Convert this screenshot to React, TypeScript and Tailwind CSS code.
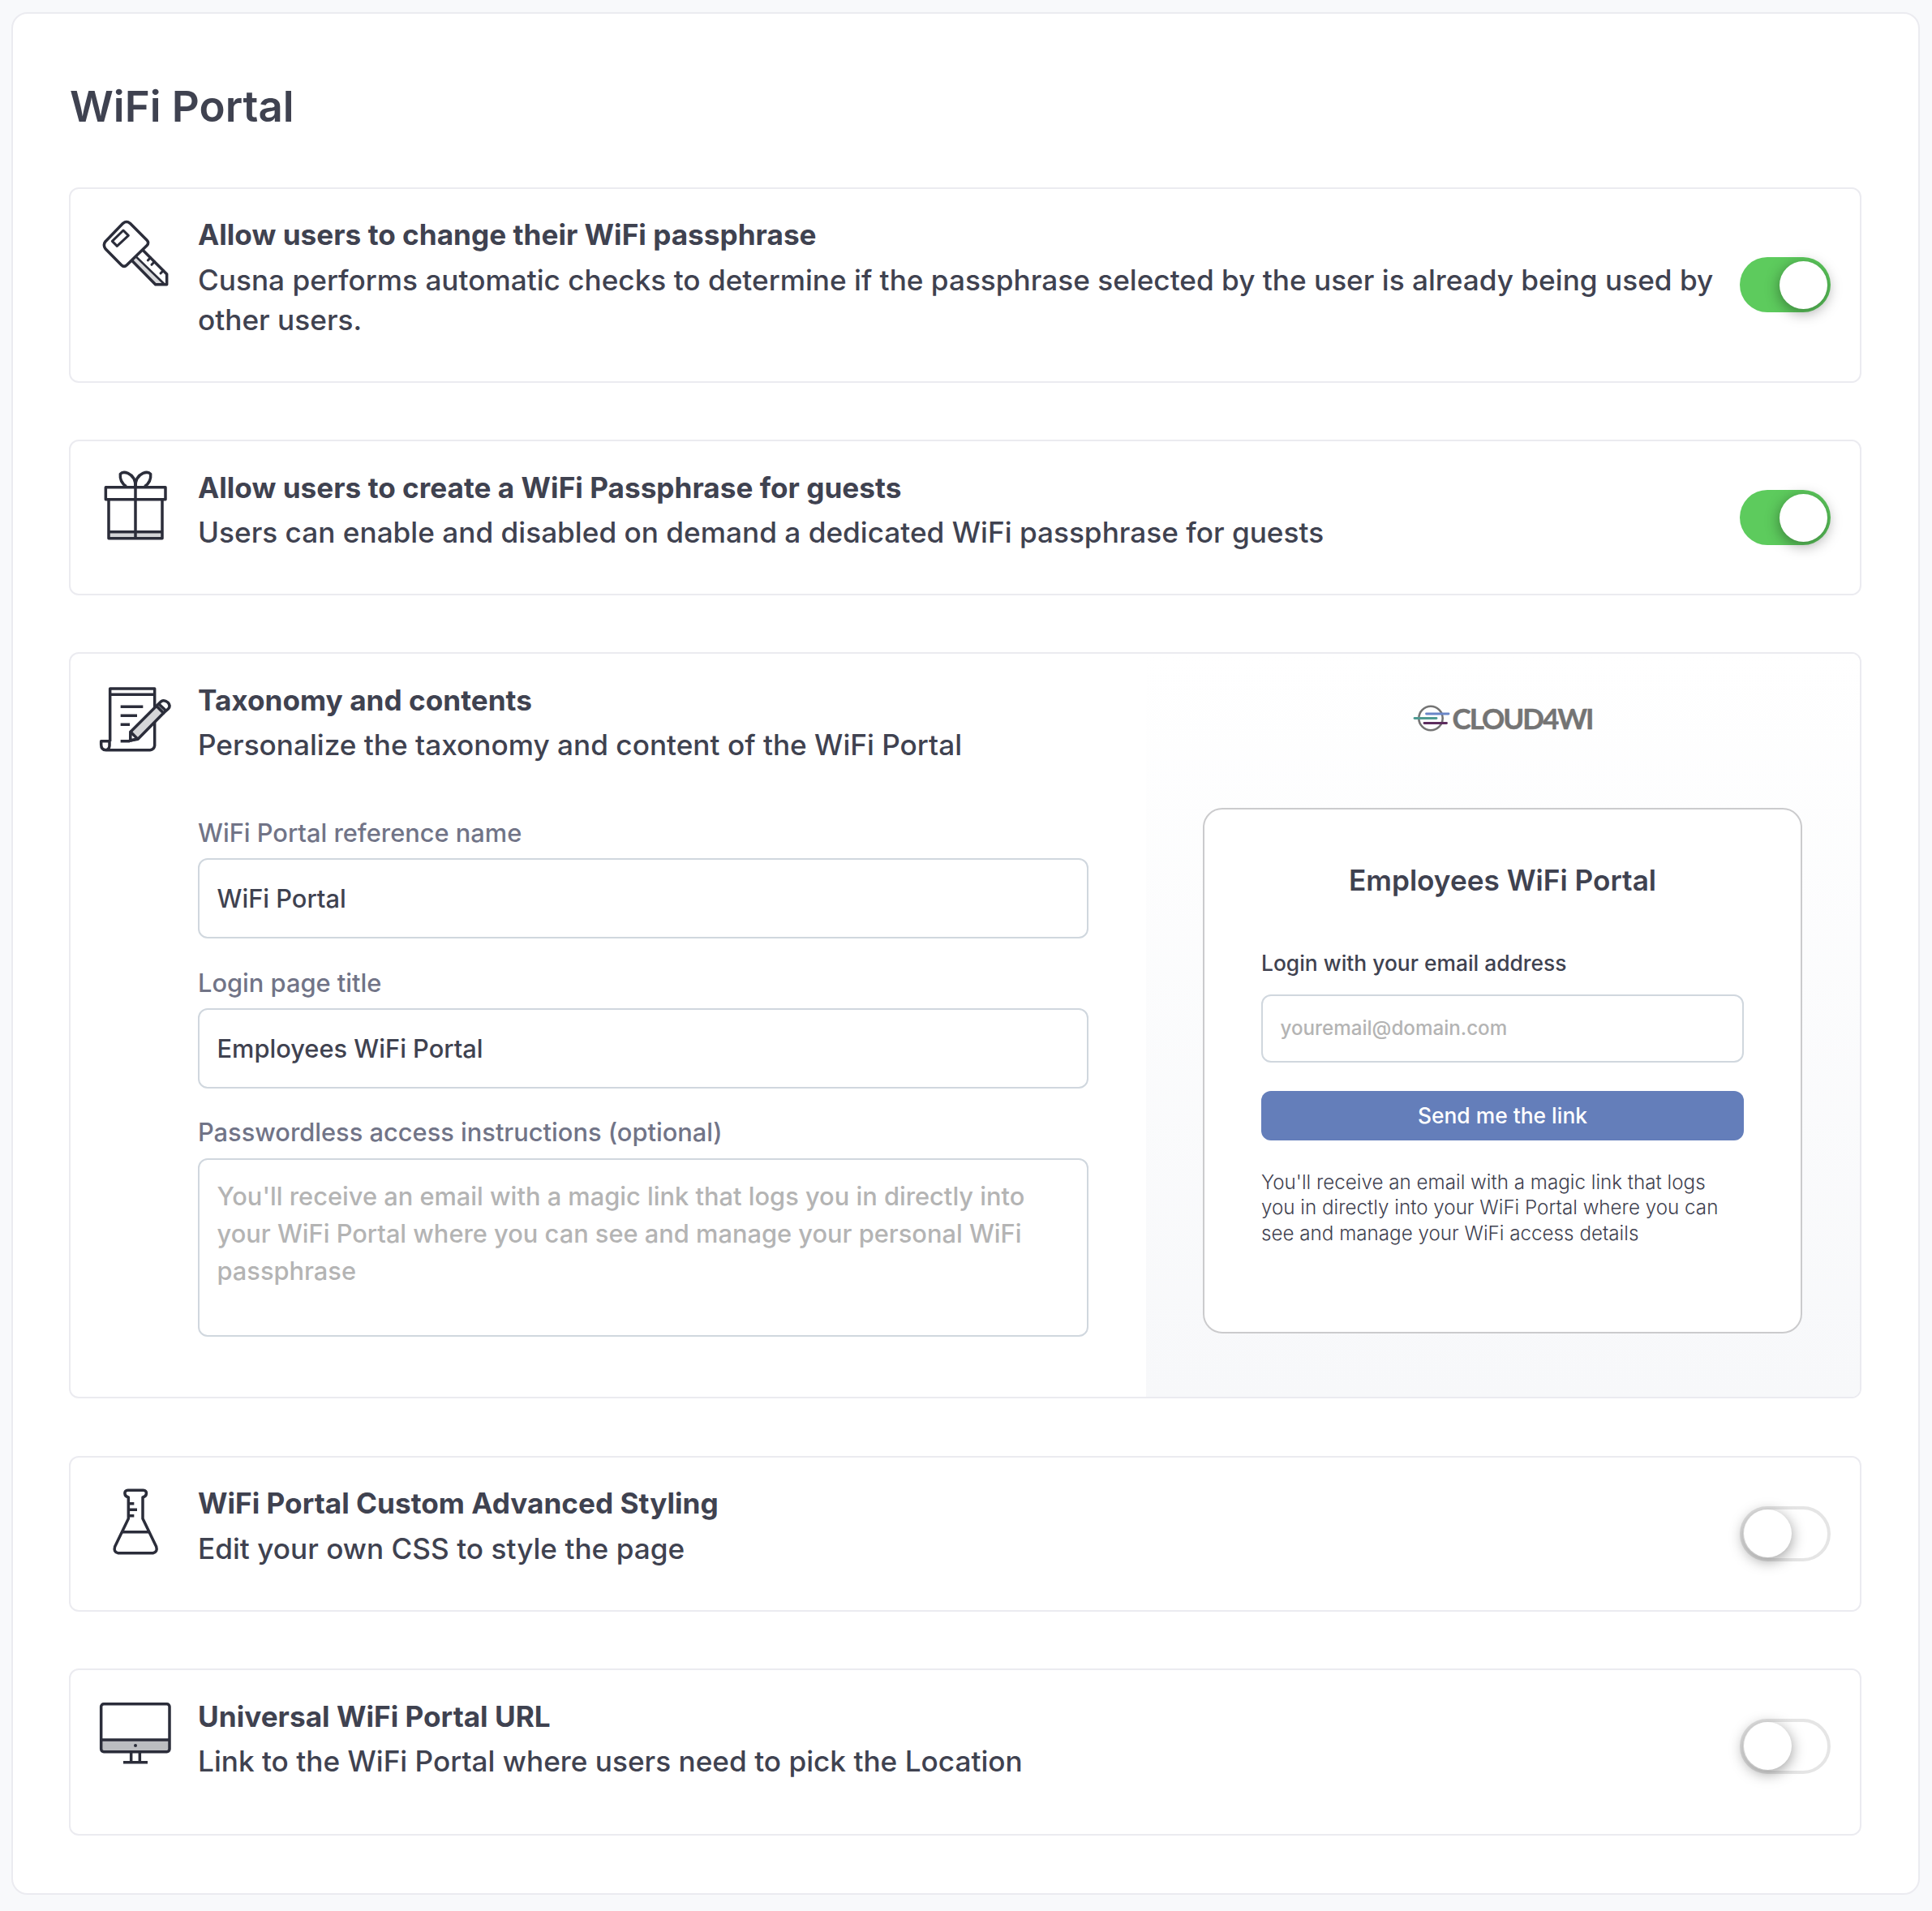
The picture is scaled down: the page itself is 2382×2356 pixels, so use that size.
import type { ReactNode } from "react";

const INK = "#2b2d3a";

function Icon({ x = 39, y, children }: { x?: number; y: number; children: ReactNode }) {
  return (
    <svg
      className="h-[88px] w-[88px] shrink-0 overflow-visible"
      viewBox={`${x} ${y} 264 264`}
      fill="none"
      stroke={INK}
      strokeWidth="10.500"
      strokeLinejoin="round"
    >
      {children}
    </svg>
  );
}

const KeyIcon = () => (
  <Icon x={41} y={51}>
    <path d="M166 209 L177 199 L282 303 L247 303 L158 213Z" fill="#d8d9db" stroke="none" />
    <path d="M127 76 Q140 65 153 76 L215 138 Q225 148 215 158 L141 230 Q131 240 121 230 L62 170 Q52 156 62 143Z" />
    <path d="M128 102 L147 121 L105 160 L87 142Z" strokeWidth="9" />
    <path d="M200 175 L289 264 V302 H247 L160 214" />
    <path d="M175 199 L279 300" strokeWidth="8" />
    <path d="M228 203 L219 213 M243 218 L233 229 M276 251 L266 261" strokeWidth="9" strokeLinecap="round" />
  </Icon>
);

const GiftIcon = () => (
  <Icon y={39}>
    <rect x="74" y="277" width="194" height="16" fill="#d3d4d6" stroke="none" />
    <rect x="61" y="107" width="221" height="45" />
    <path d="M72 152 V296 H270 V152 M72 272 H270 M171 85 V296" />
    <path d="M171 103 Q171 68 143 55 Q124 48 115 58 Q112 88 137 104" />
    <path d="M171 103 Q171 68 199 55 Q218 48 227 58 Q230 88 205 104" />
  </Icon>
);

const ScrollIcon = () => (
  <Icon y={30}>
    <path d="M77 252 V57 H242 V268 Q240 283 225 284 H62 Q44 284 44 264 V251 H75 V268 Q74 282 62 284 M77 79 H242" />
    <path d="M116 124 H199 M116 157 H177 M116 190 H150 M116 251 H150" />
    <path d="M153 217 L249 121 L275 147 L180 244 L152 249Z" fill="#d5d6d8" />
    <path d="M153 217 L178 242 L152 249Z" fill="#ffffff" />
    <path d="M249 121 L266 104 Q278 97 291 108 Q303 121 292 132 L275 147Z" fill="#ffffff" />
    <path d="M257 113 L284 139" />
    <path d="M151 238 L162 248 L152 250Z" fill={INK} strokeWidth="3" />
  </Icon>
);

const FlaskIcon = () => (
  <Icon y={33}>
    <path d="M145 157 V78 C128 74 127 52 143 52 H200 C216 52 215 74 198 78 V157 L248 260 Q254 280 236 284 H106 Q89 280 95 260Z" />
    <path d="M121 206 H222 M145 101 H166 M145 124 H177 M145 146 H166" />
  </Icon>
);

const MonitorIcon = () => (
  <Icon y={40}>
    <path d="M45 197 H297 V231 Q296 240 288 240 H54 Q46 240 45 231Z" fill="#bcbdc1" stroke="none" />
    <rect x="44" y="63" width="253" height="177" rx="10" />
    <path d="M44 196 H297 M155 240 V276 M187 240 V276 M126 279 H216" />
    <circle cx="171" cy="217" r="6" fill={INK} stroke="none" />
  </Icon>
);

function Toggle({ on = false }: { on?: boolean }) {
  return (
    <div
      className={
        on
          ? "flex h-[68px] w-[112px] shrink-0 items-center justify-end rounded-full bg-[#5dcb5d] pr-1"
          : "flex h-[68px] w-[112px] shrink-0 items-center rounded-full border-4 border-[#e5e5e5] bg-white pl-px pb-px"
      }
    >
      <div className="h-[59px] w-[59px] rounded-full bg-white shadow-[0_4px_18px_rgba(0,0,0,0.4)]" />
    </div>
  );
}

function Heading({ title, text, snug = false }: { title: string; text: string; snug?: boolean }) {
  return (
    <div className="min-w-0 text-[35.2px] leading-[49px]">
      <h2 className={snug ? "pt-px font-bold" : "font-bold"}>{title}</h2>
      <p className={snug ? "mt-1.5 font-medium" : "mt-[7px] font-medium"}>{text}</p>
    </div>
  );
}

function OptionCard({
  icon,
  title,
  text,
  on,
  snug,
  className,
}: {
  icon: ReactNode;
  title: string;
  text: string;
  on?: boolean;
  snug?: boolean;
  className: string;
}) {
  return (
    <section
      className={`flex items-center rounded-xl border-2 border-[#ebebf0] bg-white pr-9 pl-9 ${className}`}
    >
      <div className="flex min-w-0 flex-1 items-start gap-[33px] self-start pt-8">
        <div className="pt-0.5">{icon}</div>
        <Heading title={title} text={text} snug={snug} />
      </div>
      <Toggle on={on} />
    </section>
  );
}

const fieldBox = "rounded-xl border-2 border-[#d0d7de] bg-white px-[21.5px]";

function Field({ label, value }: { label: string; value: string }) {
  return (
    <div className="mb-[37px]">
      <label className="mb-[13px] block leading-9 text-[#717487]">{label}</label>
      <div className={`flex h-[99px] items-center pt-0.5 ${fieldBox}`}>{value}</div>
    </div>
  );
}

function Logo() {
  return (
    <svg className="ml-1 block h-[70px] w-[270px]" viewBox="0 0 270 70">
      <circle cx="44" cy="35.500" r="14.700" fill="none" stroke="#747474" strokeWidth="2.600" />
      <path d="M38.500 30 H66" stroke="#6a86c8" strokeWidth="2.800" strokeLinecap="round" />
      <path d="M24 35.500 H51" stroke="#4f9a92" strokeWidth="2.800" strokeLinecap="round" />
      <path d="M36 41.500 H63.500" stroke="#5c2c5e" strokeWidth="2.800" strokeLinecap="round" />
      <text
        x="70.500"
        y="48.500"
        fontFamily="Lato, sans-serif"
        fontWeight="700"
        fontSize="35"
        fill="#747474"
        stroke="#747474"
        strokeWidth="0.500"
        textLength="175"
        lengthAdjust="spacing"
      >
        CLOUD4WI
      </text>
    </svg>
  );
}

function Preview() {
  return (
    <div className="flex w-[880px] shrink-0 flex-col items-center rounded-r-[10px] bg-linear-to-b from-white to-[#f7f8fa] pt-[44px]">
      <Logo />
      <div className="mt-[76px] mr-px h-[648px] w-[739px] rounded-3xl border-2 border-[#cbcbcd] bg-white px-[70px] pt-[62px]">
        <h3 className="text-center text-[35.2px] leading-[50px] font-semibold">Employees WiFi Portal</h3>
        <label className="mt-[59px] block text-[26.4px] leading-[36px] font-medium">
          Login with your email address
        </label>
        <div className={`mt-[21px] flex h-[84px] items-center text-[24.2px] font-medium text-[#b4b4b4] ${fieldBox}`}>
          youremail@domain.com
        </div>
        <button className="mt-[35px] flex h-[61px] w-full items-center justify-center rounded-xl bg-[#647eba] text-[26.4px] font-medium text-white">
          Send me the link
        </button>
        <p className="mt-9 text-[24.2px] leading-[31.4px] font-light">
          You'll receive an email with a magic link that logs
          <br />
          you in directly into your WiFi Portal where you can
          <br />
          see and manage your WiFi access details
        </p>
      </div>
    </div>
  );
}

export default function App() {
  return (
    <div
      className="h-[2356px] w-[2382px] bg-[#f8f9fb] pt-[15px] pl-[14px] text-[#3f4250]"
      style={{ fontFamily: "Inter, sans-serif" }}
    >
      <main className="h-[2321px] w-[2353px] rounded-[20px] border-2 border-[#ebebf0] bg-white pt-[82px] pr-[70px] pl-[69px]">
        <h1 className="pl-px text-[52.8px] leading-[64px] font-semibold">WiFi Portal</h1>

        <OptionCard
          className="mt-[68px] h-[241px] pb-px"
          icon={<KeyIcon />}
          title="Allow users to change their WiFi passphrase"
          text="Cusna performs automatic checks to determine if the passphrase selected by the user is already being used by other users."
          on
        />
        <OptionCard
          className="mt-[70px] h-[192px]"
          icon={<GiftIcon />}
          title="Allow users to create a WiFi Passphrase for guests"
          text="Users can enable and disabled on demand a dedicated WiFi passphrase for guests"
          on
          snug
        />

        <section className="mt-[70px] flex h-[920px] rounded-xl border-2 border-[#ebebf0] bg-white">
          <div className="flex flex-1 items-start gap-[33px] pt-8 pr-[71px] pl-9">
            <div className="pt-0.5">
              <ScrollIcon />
            </div>
            <div className="flex-1">
              <Heading
                title="Taxonomy and contents"
                text="Personalize the taxonomy and content of the WiFi Portal"
                snug
              />
              <div className="mt-[66px] text-[30.8px] font-medium">
                <Field label="WiFi Portal reference name" value="WiFi Portal" />
                <Field label="Login page title" value="Employees WiFi Portal" />
                <label className="-mt-px mb-3.5 block leading-9 text-[#717487]">
                  Passwordless access instructions (optional)
                </label>
                <div className={`h-[220px] pt-[22px] leading-[46.2px] text-[#b4b4b4] ${fieldBox}`}>
                  You'll receive an email with a magic link that logs you in directly into your WiFi Portal
                  where you can see and manage your personal WiFi passphrase
                </div>
              </div>
            </div>
          </div>
          <Preview />
        </section>

        <OptionCard
          className="mt-[71px] h-[192px]"
          icon={<FlaskIcon />}
          title="WiFi Portal Custom Advanced Styling"
          text="Edit your own CSS to style the page"
        />
        <OptionCard
          className="mt-[70px] h-[206px] pb-[14px]"
          icon={<MonitorIcon />}
          title="Universal WiFi Portal URL"
          text="Link to the WiFi Portal where users need to pick the Location"
          snug
        />
      </main>
    </div>
  );
}
